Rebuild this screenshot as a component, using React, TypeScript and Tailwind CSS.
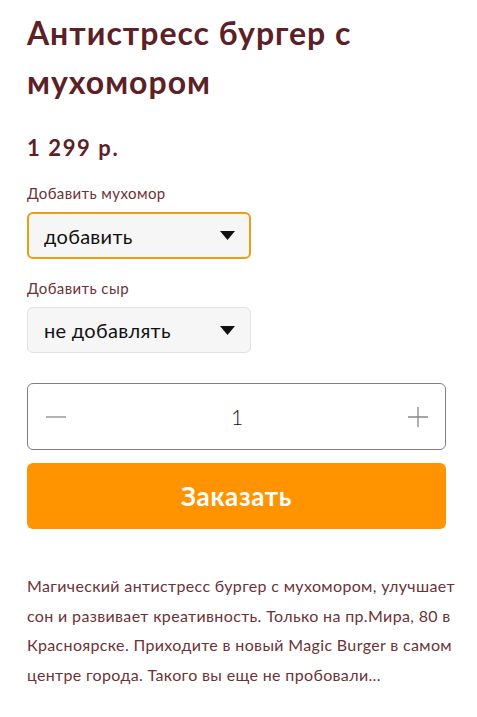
import { useState } from 'react';

const Caret = () => (
  <svg width="15" height="9" viewBox="0 0 15 9" className="shrink-0">
    <path d="M0 0H15L7.5 9Z" fill="#111" />
  </svg>
);

function Select({ label, value, active }: { label: string; value: string; active?: boolean }) {
  return (
    <div className="flex flex-col">
      <span className="text-[15px] leading-[20px] tracking-[0.4px] text-[#6b3338] mb-[9px]">{label}</span>
      <div
        className={`w-[224px] flex items-center justify-between pl-[15px] pr-[14px] rounded-[6px] bg-[#f6f6f6] ${
          active ? 'h-[47px] border-2 border-[#ec9e12]' : 'h-[46px] border border-[#e2e2e2] pl-[16px] pr-[15px]'
        }`}
      >
        <span className="text-[20px] tracking-[0.3px] text-[#111]">{value}</span>
        <Caret />
      </div>
    </div>
  );
}

export default function App() {
  const [qty, setQty] = useState(1);

  return (
    <div className="w-[477px] min-h-[717px] bg-white pl-[27px] pr-[31px] pt-[8px] font-['Lato','Noto_Sans',sans-serif]">
      <h1 className="text-[32px] leading-[49px] font-bold text-[#5c2126] tracking-[1px]">
        Антистресс бургер с мухомором
      </h1>

      <div className="mt-[29px] text-[22px] leading-[26px] font-bold text-[#5c2126] tracking-[1.6px]">1 299 р.</div>

      <div className="mt-[22px] flex flex-col gap-[19px]">
        <Select label="Добавить мухомор" value="добавить" active />
        <Select label="Добавить сыр" value="не добавлять" />
      </div>

      <div className="mt-[30px] h-[67px] rounded-[6px] border border-[#808080] flex items-center justify-between pl-[18px] pr-[17px]">
        <button onClick={() => setQty(Math.max(1, qty - 1))} className="w-[20px] h-[20px] flex items-center justify-center">
          <svg width="20" height="20" viewBox="0 0 20 20">
            <path d="M0 10H20" stroke="#888" strokeWidth="1.3" />
          </svg>
        </button>
        <span className="text-[21px] font-light text-[#111]">{qty}</span>
        <button onClick={() => setQty(qty + 1)} className="w-[20px] h-[20px] flex items-center justify-center">
          <svg width="20" height="20" viewBox="0 0 20 20">
            <path d="M0 10H20M10 0V20" stroke="#888" strokeWidth="1.3" />
          </svg>
        </button>
      </div>

      <button className="mt-[13px] w-full h-[66px] rounded-[6px] bg-[#ff9400] text-white text-[26px] font-bold tracking-[0.6px]">
        Заказать
      </button>

      <p className="mt-[42px] text-[16px] leading-[29.5px] tracking-[0.35px] text-[#6b3338] whitespace-nowrap">
        Магический антистресс бургер с мухомором, улучшает
        <br />
        сон и развивает креативность. Только на пр.Мира, 80 в
        <br />
        Красноярске. Приходите в новый Magic Burger в самом
        <br />
        центре города. Такого вы еще не пробовали...
      </p>
    </div>
  );
}
